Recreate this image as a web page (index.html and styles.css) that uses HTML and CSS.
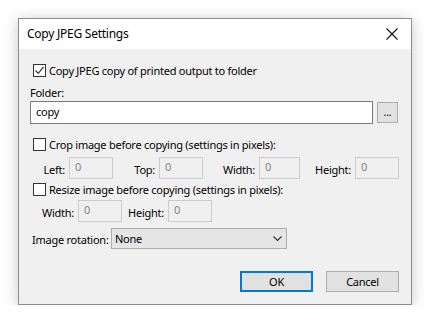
FILE: index.html
```html
<!DOCTYPE html>
<html lang="en">
<head>
  <meta charset="UTF-8" />
  <title>Copy JPEG Settings</title>
  <link rel="stylesheet" href="styles.css">
</head>
<body>
  <div class="window">
    <div class="titlebar">
      <span class="title">Copy JPEG Settings</span>
      <svg class="close" width="12" height="12" viewBox="0 0 12 12">
        <path d="M0.5 0.5 L11.5 11.5 M11.5 0.5 L0.5 11.5" stroke="#111" stroke-width="1.1" fill="none"/>
      </svg>
    </div>

    <div class="content">
      <label class="check-row">
        <span class="checkbox checked">
          <svg width="11" height="11" viewBox="0 0 11 11"><path d="M1.5 5.5 L4.2 8.3 L9.6 1.8" stroke="#333" stroke-width="1.2" fill="none"/></svg>
        </span>
        Copy JPEG copy of printed output to folder
      </label>

      <div class="folder-label">Folder:</div>
      <div class="folder-row">
        <div class="textbox">copy</div>
        <div class="browse">...</div>
      </div>

      <label class="check-row crop">
        <span class="checkbox"></span>
        Crop image before copying (settings in pixels):
      </label>
      <div class="field-row">
        <div class="field f-left"><span>Left:</span><div class="num">0</div></div>
        <div class="field f-top"><span>Top:</span><div class="num">0</div></div>
        <div class="field f-width"><span>Width:</span><div class="num">0</div></div>
        <div class="field f-height"><span>Height:</span><div class="num">0</div></div>
      </div>

      <label class="check-row resize">
        <span class="checkbox"></span>
        Resize image before copying (settings in pixels):
      </label>
      <div class="field-row resize-fields">
        <div class="field r-width"><span>Width:</span><div class="num">0</div></div>
        <div class="field r-height"><span>Height:</span><div class="num">0</div></div>
      </div>

      <div class="rotation-row">
        <span class="rotation-label">Image rotation:</span>
        <div class="select">
          None
          <svg width="9" height="5" viewBox="0 0 9 5"><path d="M0.5 0.5 L4.5 4.5 L8.5 0.5" stroke="#333" stroke-width="1.1" fill="none"/></svg>
        </div>
      </div>

      <div class="buttons">
        <div class="btn default">OK</div>
        <div class="btn">Cancel</div>
      </div>
    </div>
  </div>
</body>
</html>
```

FILE: styles.css
```css
body {
  margin: 0;
  background: #fff;
  font-family: "Noto Sans", "DejaVu Sans", sans-serif;
  font-size: 11px;
  letter-spacing: -0.25px;
  color: #000;
  white-space: nowrap;
}
.window {
  margin: 18px 0 0 18px;
  width: 394px;
  height: 287px;
  box-sizing: border-box;
  border: 1px solid #8c8c8c;
  box-shadow: 0 2px 14px rgba(0, 0, 0, 0.22);
  display: flex;
  flex-direction: column;
}
.titlebar {
  height: 30px;
  background: #fff;
  display: flex;
  align-items: center;
  justify-content: space-between;
  padding: 0 13px 0 8px;
}
.title {
  font-size: 12px;
  margin-top: -1px;
}
.close {
  display: block;
}
.content {
  flex: 1;
  background: #f0f0f0;
  padding: 14px 12px 0 11px;
}
.check-row {
  display: flex;
  align-items: center;
  height: 15px;
  padding-left: 3px;
  gap: 3px;
}
.checkbox {
  width: 11px;
  height: 11px;
  border: 1px solid #333;
  background: #fff;
  display: flex;
  align-items: center;
  justify-content: center;
}
.folder-label {
  margin-top: 8px;
  height: 14px;
  line-height: 14px;
}
.folder-row {
  margin-top: 1px;
  display: flex;
  align-items: center;
  gap: 4px;
}
.textbox {
  width: 343px;
  height: 23px;
  box-sizing: border-box;
  border: 1px solid #7a7a7a;
  background: #fff;
  padding-left: 5px;
  line-height: 20px;
}
.browse {
  width: 21px;
  height: 21px;
  box-sizing: border-box;
  border: 1px solid #adadad;
  background: #e1e1e1;
  text-align: center;
  line-height: 18px;
}
.check-row.crop {
  margin-top: 13px;
}
.field-row {
  margin-top: 5px;
  display: flex;
  height: 22px;
}
.field {
  display: flex;
  justify-content: flex-end;
  align-items: center;
  gap: 4px;
}
.field span {
  margin-top: 3px;
}
.num {
  width: 44px;
  height: 22px;
  box-sizing: border-box;
  border: 1px solid #cccccc;
  background: #f0f0f0;
  color: #838383;
  padding-left: 5px;
  line-height: 17px;
}
.f-left { width: 83px; }
.f-top { width: 90px; }
.f-width { width: 97px; }
.f-width .num { width: 41px; }
.f-height { width: 99px; }
.check-row.resize {
  margin-top: 3px;
}
.resize-fields {
  margin-top: 3px;
}
.r-width { width: 92px; }
.r-height { width: 90px; }
.rotation-row {
  margin-top: 6px;
  display: flex;
  align-items: center;
  padding-left: 2px;
}
.rotation-label {
  width: 79px;
  margin-top: 1px;
}
.select {
  width: 176px;
  height: 21px;
  box-sizing: border-box;
  border: 1px solid #adadad;
  background: #e5e5e5;
  display: flex;
  align-items: center;
  justify-content: space-between;
  padding: 0 4px 0 3px;
}
.buttons {
  margin-top: 22px;
  display: flex;
  justify-content: flex-end;
  gap: 13px;
}
.btn {
  width: 73px;
  height: 21px;
  box-sizing: border-box;
  border: 1px solid #adadad;
  background: #e1e1e1;
  text-align: center;
  line-height: 19px;
}
.btn.default {
  border: 2px solid #0078d7;
  line-height: 17px;
}
```
